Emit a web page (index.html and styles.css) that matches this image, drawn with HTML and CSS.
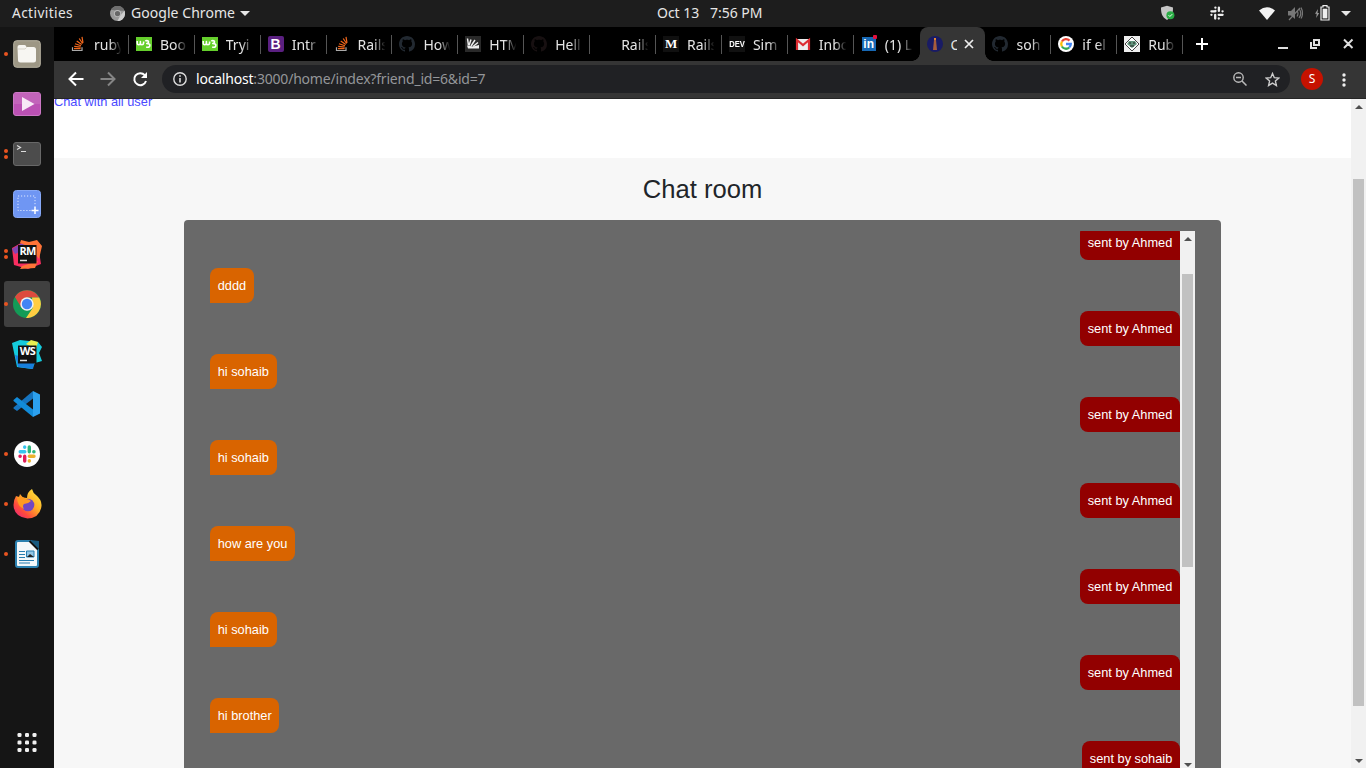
FILE: index.html
```html
<!DOCTYPE html>
<html lang="en">
<head>
<meta charset="utf-8">
<title>Chat room</title>
<link rel="stylesheet" href="styles.css">
</head>
<body>
<svg class="defs" width="0" height="0">
  <symbol id="so" viewBox="0 0 16 16"><path d="M2.500 11.200v3.300h9.500v-3.300" fill="none" stroke="#aaa" stroke-width="1.200"/><path d="M4 12.600h6.600M4.200 10.300l6.500.8M5 7.800l6 2M6.700 4.900l5 3.600M9.200 2.500l3.400 5M12 .8l1 6" stroke="#f4681c" stroke-width="1.200"/></symbol>
  <symbol id="w3" viewBox="0 0 16 16"><path fill="#65cf2c" d="M0 1h16v14H0z"/><path d="M1.200 5v2.200q0 1.600 1.500 1.600T4.400 7.200V5.500v1.700q0 1.600 1.500 1.600t1.700-1.600V5.500M9.300 5.200q1.500-1.300 3 0 .8 1.600-1.500 2.300 3.600 0 3 2.400-.9 2.200-3.600 1" fill="none" stroke="#fff" stroke-width="1.600" stroke-linejoin="round"/></symbol>
  <symbol id="gh" viewBox="0 0 16 16"><path fill="currentColor" d="M8 0C3.580 0 0 3.580 0 8c0 3.540 2.290 6.530 5.470 7.590.4.070.55-.17.55-.38 0-.19-.010-.82-.010-1.490-2.010.37-2.530-.49-2.690-.94-.09-.23-.48-.94-.82-1.130-.28-.15-.68-.52-.010-.53.63-.010 1.080.58 1.230.82.72 1.210 1.870.87 2.330.66.070-.52.28-.87.510-1.070-1.780-.2-3.640-.89-3.640-3.950 0-.87.310-1.590.82-2.150-.08-.2-.36-1.020.08-2.120 0 0 .67-.21 2.200.82.640-.18 1.320-.27 2-.27s1.360.09 2 .27c1.530-1.040 2.200-.82 2.200-.82.440 1.100.16 1.920.08 2.120.510.56.82 1.270.82 2.150 0 3.070-1.870 3.750-3.650 3.950.29.25.540.73.540 1.480 0 1.070-.010 1.930-.010 2.200 0 .21.15.46.55.38A8 8 0 0 0 16 8c0-4.420-3.580-8-8-8z"/></symbol>
  <symbol id="rm" viewBox="0 0 30 30"><path fill="#f82e60" d="M0 9l9-5 17 2 3 19-13 5-14-4z"/><path fill="#8345b4" d="M0 10l10-6 7 5L3 15z"/><path fill="#ff7438" d="M9 1l8 2 8-2 5 6-3 13-9-12-10-4zM10 27l16-5-3 7-15 1z"/><path fill="#111" d="M6 6h18.500v18.500H6z"/><path d="M8 21.500h7" stroke="#ddd" stroke-width="1.500"/></symbol>
</svg>
<div class="screen">
  <header class="topbar">
    <span class="activities">Activities</span>
    <svg class="app-ico" width="15" height="15" viewBox="0 0 16 16"><circle cx="8" cy="8" r="8" fill="#999"/><path d="M1 4a8 8 0 0 1 14.500 1H8z" fill="#6f6f6f"/><path d="M15.500 5A8 8 0 0 1 8 16l3-6z" fill="#ccc"/><circle cx="8" cy="8" r="3.800" fill="#bbb"/><circle cx="8" cy="8" r="2.800" fill="#666"/></svg>
    <span class="app-name">Google Chrome</span>
    <i class="caret"></i>
    <span class="clock">Oct 13&nbsp;&nbsp; 7:56 PM</span>
    <div class="tray">
      <svg width="15" height="16" viewBox="0 0 15 16"><path d="M1 2.500L7 .7l6 1.800c0 6-1 9.500-6 12.500C2 12 1 8.500 1 2.500z" fill="#c6c6c6"/><circle cx="10.400" cy="10.200" r="4" fill="#2aad45"/><path d="M8.600 10.200l1.300 1.300 2.300-2.300" fill="none" stroke="#fff"/></svg>
      <svg class="t-slack" width="14" height="14" viewBox="0 0 14 14"><path d="M5.400 4.900V4.800M5.400 1.600v.1M8.900 1.600v3.300M1.400 5.300h4M12.500 5.300h.1M1.400 8.800h.1M8.700 8.800h3.900M5.200 8.900v3.600M8.800 12.500v.1" stroke="#eee" stroke-width="2.300" stroke-linecap="round"/></svg>
      <svg class="t-wifi" width="16" height="13" viewBox="0 0 16 13"><path d="M0 3.500Q8-2.800 16 3.500L8 13z" fill="#f2f2f2"/></svg>
      <svg class="t-vol" width="15" height="15" viewBox="0 0 15 15"><path d="M0 5h3l4-4v12L3 9.500H0z" fill="#777"/><path d="M9 4.500q2 3 0 6M11 2.500q3.500 5 0 9.500M13 1.500q3 6 0 11M1 14L12 2" fill="none" stroke="#777" stroke-width="1.200"/></svg>
      <svg class="t-bat" width="15" height="16" viewBox="0 0 15 16"><path d="M3 4L0 8.700h1.700L1.200 13l3-5H2.500z" fill="#999"/><path d="M8 .6h4V2h2v13H6V2h2z" fill="none" stroke="#eee" stroke-width="1.200"/><path d="M7.600 3.700h4.800v9.700H7.600z" fill="#eee"/></svg>
      <i class="caret"></i>
    </div>
  </header>
  <div class="desktop">
    <nav class="dock">
      <div class="app one"><svg width="28" height="28" viewBox="0 0 28 28"><rect x=".7" y=".7" width="26.600" height="26.600" rx="3" fill="#9d9785" stroke="#b8b3a2"/><path d="M4.500 7q0-2 2-2h5q1.500 0 2 2h7q2.500 0 2.500 2.500V20q0 2.500-2.500 2.500h-13Q5 22.500 5 20z" fill="#f7f6f2"/><path d="M5 9h7l1.500-1.500" fill="none" stroke="#d7d4c9"/></svg></div>
      <div class="app"><svg width="28" height="24" viewBox="0 0 28 24"><rect x=".5" y=".5" width="27" height="23" rx="2.500" fill="#bb51b4" stroke="#cb77c4"/><path d="M1 12h26V3q0-2-2-2H3Q1 1 1 3z" fill="#c264ba"/><path d="M9 5l12.500 7L9 19z" fill="#f7e9f6"/></svg></div>
      <div class="app two"><svg width="28" height="24" viewBox="0 0 28 24"><rect x=".5" y=".5" width="27" height="23" rx="2.500" fill="#4c4c4c" stroke="#686868"/><path d="M4 3.500l3.500 2L4 7.500M8 9.500h5" fill="none" stroke="#ddd" stroke-width="1.200"/></svg></div>
      <div class="app"><svg width="28" height="28" viewBox="0 0 28 28"><rect x=".5" y=".5" width="27" height="27" rx="3" fill="#6f96f3" stroke="#87a9f7"/><rect x="5" y="6" width="17" height="14.500" fill="none" stroke="#dce6ff" stroke-dasharray="1.200 1.800"/><path d="M22 17v7M18.500 20.500h7" stroke="#fff" stroke-width="1.500"/></svg></div>
      <div class="app two"><div class="jb"><svg width="30" height="30"><use href="#rm"/></svg><b>RM</b></div></div>
      <div class="app one current"><svg width="28" height="28" viewBox="0 0 28 28"><circle cx="14" cy="14" r="14" fill="#139b57"/><path d="M1.900 7A14 14 0 0 1 26.200 7.500H14L8 17z" fill="#dd4b3e"/><path d="M26.200 7.500A14 14 0 0 1 13 28l7-10.500-1-10z" fill="#ffcd42"/><circle cx="14" cy="14" r="6.700" fill="#f1f1f1"/><circle cx="14" cy="14" r="5.200" fill="#4285f4"/></svg></div>
      <div class="app"><div class="jb"><svg width="30" height="30" viewBox="0 0 30 30"><path fill="#15cbdc" d="M0 4l8-3 18 2 4 5-3 6 3 8-7 2-3 6-15-2z"/><path fill="#e8ee50" d="M14 5l5-4 7 2-2 7z"/><path fill="#187fdc" d="M3 16l3 12 15 2 2-9z"/><path fill="#111" d="M6 6.500h18.500v18H6z"/><path d="M8 21.500h7" stroke="#ddd" stroke-width="1.500"/></svg><b>WS</b></div></div>
      <div class="app"><svg width="28" height="28" viewBox="0 0 28 28"><path d="M20 1l7 3.500v19L20 27z" fill="#2ca0ee"/><path d="M20 1v7.500L4 21l-3.500-2.500v-1z" fill="#1674bf"/><path d="M.5 10L4 7l16 12.500V27L.5 11z" fill="#128bd9"/></svg></div>
      <div class="app one"><svg width="26" height="26" viewBox="0 0 26 26"><circle cx="13" cy="13" r="13" fill="#fff"/><g fill="none" stroke-width="3.400" stroke-linecap="round"><path d="M6.200 10.700h4.600M10.700 6v.2" stroke="#36c5f0"/><path d="M15.300 6v4.700M19.800 10.700h.2" stroke="#2eb67d"/><path d="M15.300 15.300h4.700M15.300 19.800v.2" stroke="#ecb22e"/><path d="M10.700 15.300V20M6.200 15.300H6" stroke="#e01e5a"/></g></svg></div>
      <div class="app one"><svg width="29" height="30" viewBox="0 0 29 30"><defs><linearGradient id="ff" x1="1" y1="0" x2=".1" y2="1"><stop offset="0" stop-color="#fff044"/><stop offset=".45" stop-color="#ffad26"/><stop offset=".75" stop-color="#ff4a3c"/><stop offset="1" stop-color="#e72281"/></linearGradient></defs><path d="M3 7l3 1 1-3 3 3.500 4 .5q0-6 5-9 1 4 4 6 6 5 5.500 11Q27 29 14.500 29.500 1 28 .5 16 .5 11 3 7z" fill="url(#ff)"/><circle cx="15" cy="16" r="6.300" fill="#7147c3"/><path d="M4 8q6-1 9 2 3 0 5 2-3 3-7 3-2 2 0 5-7-3-7-12z" fill="#ff9a22"/></svg></div>
      <div class="app one"><svg width="24" height="28" viewBox="0 0 24 28"><path d="M3 1h13l7 8v16q0 2-2 2H3q-2 0-2-2V3q0-2 2-2z" fill="#f4f8fa" stroke="#2c81b0" stroke-width="2"/><path d="M15 0l9 9V1z" fill="#185a80"/><path d="M14.500 1L23 9.500" stroke="#111" stroke-width="2"/><path d="M4 11.500h6M4 14.500h6M4 17.500h6M4 20.500h15M4 23h11" stroke="#277db0" stroke-width="1.200"/><path d="M11.500 11h7.500v6h-7.500z" fill="#92c6e6" stroke="#277db0"/><path d="M12 17l3-3 4 3z" fill="#222"/></svg></div>
      <div class="grid"><svg width="20" height="20" viewBox="0 0 20 20" fill="#f0f0f0"><g id="gr"><rect x=".5" y="1" width="4" height="4" rx="1.300"/><rect x="8" y="1" width="4" height="4" rx="1.300"/><rect x="15.500" y="1" width="4" height="4" rx="1.300"/></g><use href="#gr" y="7.500"/><use href="#gr" y="15"/></svg></div>
    </nav>
    <main class="browser">
      <div class="tabs">
        <div class="tab"><svg><use href="#so"/></svg><span>ruby</span></div>
        <div class="tab"><svg><use href="#w3"/></svg><span>Boo</span></div>
        <div class="tab"><svg><use href="#w3"/></svg><span>Tryi</span></div>
        <div class="tab"><i class="fav boot">B</i><span>Intr</span></div>
        <div class="tab"><svg><use href="#so"/></svg><span>Rails</span></div>
        <div class="tab"><svg class="gh"><use href="#gh"/></svg><span>How</span></div>
        <div class="tab"><svg viewBox="0 0 16 16"><path fill="#292929" d="M0 0h16v16H0z"/><path d="M2.500 2.500l1 7M4 9.500l2-6M6 10l4-6M8 10.500l5-4" fill="none" stroke="#eee" stroke-width="1.500"/><path d="M2 9.500l6 1 6-1.500v3.500H3z" fill="#eee"/></svg><span>HTM</span></div>
        <div class="tab"><svg class="gh dim"><use href="#gh"/></svg><span>Hell</span></div>
        <div class="tab"><svg></svg><span>Rails</span></div>
        <div class="tab"><i class="fav med">M</i><span>Rails</span></div>
        <div class="tab"><i class="fav dev">DEV</i><span>Sim</span></div>
        <div class="tab"><svg viewBox="0 0 16 16"><path fill="#eee" d="M1 3h14v11H1z"/><path d="M2 14V4l6 5 6-5v10" fill="none" stroke="#dd2c32" stroke-width="2.200"/></svg><span>Inbo</span></div>
        <div class="tab last"><i class="fav in">in</i><span>(1) L</span></div>
        <div class="tab active"><svg viewBox="0 0 16 16"><circle cx="8" cy="8" r="8" fill="#191b65"/><path d="M7 4h2l1 10H6z" fill="#a65c3c"/><path d="M7 2h2v2H7z" fill="#e88a2e"/></svg><span>C</span><svg class="close" viewBox="0 0 10 10"><path d="M1 1l8 8M9 1L1 9" stroke="#eee" stroke-width="1.700"/></svg></div>
        <div class="tab"><svg class="gh"><use href="#gh"/></svg><span>soh</span></div>
        <div class="tab"><svg viewBox="0 0 16 16"><circle cx="8" cy="8" r="8" fill="#fff"/><g fill="none" stroke-width="2.300"><path d="M3.900 5.500A4.800 4.800 0 0 1 11.500 4.600" stroke="#ea4335"/><path d="M3.900 10.500a5 5 0 0 1 0-5" stroke="#fbbc05"/><path d="M3.900 10.500a4.800 4.800 0 0 0 7.300 1" stroke="#34a853"/><path d="M8 8h4.800q0 2-1.600 3.500" stroke="#4285f4"/></g></svg><span>if el</span></div>
        <div class="tab"><svg viewBox="0 0 16 16"><path fill="#eee" d="M0 0h16v16H0z"/><path d="M8 1l7 7-7 7-7-7z" fill="#fff" stroke="#444"/><path d="M5 5h6l2 3-5 4-5-4z" fill="#62947c"/><path d="M5 7h2M9 7h2M6 10h4" stroke="#222"/></svg><span>Rub</span></div>
        <svg class="plus" viewBox="0 0 12 12"><path d="M6 0v12M0 6h12" stroke="#fff" stroke-width="2"/></svg>
        <svg class="wins" width="76" height="12" viewBox="0 0 76 12" fill="none" stroke="#ddd" stroke-width="2"><path d="M0 10h10M36 2h5v5h-5zM33 4v6h6M66 1.500l8.500 8.500M74.500 1.500L66 10"/></svg>
      </div>
      <div class="toolbar">
        <svg class="nav" viewBox="0 0 16 16"><path d="M15.500 8H2.500M8 1.500L1.500 8 8 14.500" fill="none" stroke="#fff" stroke-width="2"/></svg>
        <svg class="nav" viewBox="0 0 16 16"><path d="M.5 8h13M8 1.500L14.500 8 8 14.500" fill="none" stroke="#858585" stroke-width="2"/></svg>
        <svg class="nav" viewBox="0 0 16 16"><path d="M12.800 4.200A6 6 0 1 0 14 10" fill="none" stroke="#fff" stroke-width="2"/><path d="M15 1v6H9z" fill="#fff"/></svg>
        <div class="omni">
          <svg width="14" height="14" viewBox="0 0 14 14"><circle cx="7" cy="7" r="6.200" fill="none" stroke="#ddd" stroke-width="1.400"/><path d="M7 6v4.500M7 3.300v1.500" stroke="#ddd" stroke-width="1.600"/></svg>
          <span class="url"><b>localhost</b>:3000/home/index?friend_id=6&amp;id=7</span>
          <svg class="mag" width="14" height="14" viewBox="0 0 14 14"><circle cx="5.500" cy="5.500" r="4.700" fill="none" stroke="#bbb" stroke-width="1.400"/><path d="M9 9l4.500 4.500M3 5.500h5" stroke="#bbb" stroke-width="1.500"/></svg>
          <svg width="15" height="15" viewBox="0 0 15 15"><path d="M7.500 1.500l1.800 4.200 4.500.4-3.400 3 1 4.400-3.900-2.400-3.900 2.400 1-4.400-3.400-3 4.500-.4z" fill="none" stroke="#ccc" stroke-width="1.400"/></svg>
        </div>
        <div class="avatar">S</div>
        <svg class="kebab" width="4" height="14" viewBox="0 0 4 14" fill="#eee"><circle cx="2" cy="2" r="1.700"/><circle cx="2" cy="7" r="1.700"/><circle cx="2" cy="12" r="1.700"/></svg>
      </div>
      <div class="view">
        <div class="page">
          <div class="head"><a class="all">Chat with all user</a></div>
          <h1>Chat room</h1>
          <div class="room">
            <div class="messages">
              <p class="sent">sent by Ahmed</p>
              <p class="got">dddd</p>
              <p class="sent">sent by Ahmed</p>
              <p class="got">hi sohaib</p>
              <p class="sent">sent by Ahmed</p>
              <p class="got">hi sohaib</p>
              <p class="sent">sent by Ahmed</p>
              <p class="got">how are you</p>
              <p class="sent">sent by Ahmed</p>
              <p class="got">hi sohaib</p>
              <p class="sent">sent by Ahmed</p>
              <p class="got">hi brother</p>
              <p class="sent">sent by sohaib</p>
            </div>
            <div class="bar inner"><i class="up"></i><i class="thumb"></i><i class="down"></i></div>
          </div>
        </div>
        <div class="bar outer"><i class="up"></i><i class="thumb"></i><i class="down"></i></div>
      </div>
    </main>
  </div>
</div>
</body>
</html>
```
FILE: styles.css
```css
* { box-sizing: border-box; }
body { margin: 0; background: #151515; font-family: "Noto Sans", sans-serif; }
svg { display: block; flex: none; }
.defs { position: absolute; }
.screen { width: 1366px; height: 768px; overflow: hidden; display: flex; flex-direction: column; }

.topbar { height: 27px; flex: none; display: flex; align-items: center; background: #1d1d1d; color: #e6e6e6; font-size: 14px; line-height: 18px; padding-left: 12px; white-space: nowrap; }
.topbar > span { margin-top: -1px; }
.activities { width: 98px; letter-spacing: .4px; }
.activities { font-size: 13.700px; }
.app-name { width: 105px; margin-left: 6px; letter-spacing: .05px; }
.caret { width: 0; border: 5px solid transparent; border-top-color: #e6e6e6; border-bottom: 0; margin-left: 4px; }
.clock { margin-left: 407px; width: 107px; letter-spacing: -.03px; }
.tray { display: flex; align-items: center; margin-left: 396px; margin-top: -1px; }
.t-slack { margin-left: 35px; }
.t-wifi { margin-left: 35px; }
.t-vol { margin-left: 13px; }
.t-bat { margin-left: 12px; }
.tray .caret { margin-left: 11px; }

.desktop { flex: 1; display: flex; min-height: 0; }
.dock { width: 54px; flex: none; background: #151515; display: flex; flex-direction: column; align-items: center; padding-top: 4px; }
.app { position: relative; width: 46px; height: 46px; margin-bottom: 4px; border-radius: 3px; display: flex; flex: none; align-items: center; justify-content: center; }
.current { background: #404040; }
.one::before, .two::before { content: ""; position: absolute; left: 0; top: 21px; width: 4px; height: 4px; border-radius: 50%; background: #e95420; }
.two::before { top: 18px; box-shadow: 0 6px #e95420; }
.jb { position: relative; }
.jb b { position: absolute; left: 6px; top: 6px; width: 19px; text-align: center; font: bold 11px/12px "Open Sans", sans-serif; color: #fff; letter-spacing: -.7px; }
.grid { margin-top: auto; padding-bottom: 16px; }

.browser { flex: 1; min-width: 0; display: flex; flex-direction: column; }
.tabs { height: 34px; flex: none; background: #000; display: flex; align-items: center; padding-left: 9px; }
.tab { position: relative; width: 65.900px; height: 34px; flex: none; display: flex; align-items: center; padding-left: 7px; color: #e4e4e4; font-size: 14px; }
.tab::after { content: ""; position: absolute; right: 0; top: 8px; width: 1px; height: 19px; background: #555; }
.tab svg, .fav { width: 16px; height: 16px; flex: none; }
.tab span { width: 28px; margin-left: 8px; overflow: hidden; white-space: nowrap; -webkit-mask-image: linear-gradient(90deg, #000 55%, transparent 98%); mask-image: linear-gradient(90deg, #000 55%, transparent 98%); }
.tab.active::after, .tab.last::after { display: none; }
.active { background: #353535; border-radius: 8px 8px 0 0; }
.active::before { content: ""; position: absolute; left: -8px; right: -8px; bottom: 0; height: 8px; background: radial-gradient(circle at 0 0, transparent 7.500px, #353535 8px) left / 8px 8px no-repeat, radial-gradient(circle at 100% 0, transparent 7.500px, #353535 8px) right / 8px 8px no-repeat; }
.tab.active span { width: 6px; -webkit-mask-image: none; mask-image: none; }
.tab .close { width: 10px; height: 10px; margin-left: 7px; }
.tab .gh { color: #222931; }
.tab .dim { color: #171011; }
.fav { font: bold 12px/16px "Liberation Sans", sans-serif; color: #fff; text-align: center; }
.boot { background: #5b2081; border-radius: 2px; font-size: 14px; }
.med { font: bold 13px/16px "Liberation Serif", serif; background: #101010; }
.dev { background: #111; font-size: 9.500px; letter-spacing: 0; transform: scaleX(.8); width: 20px; margin: 0 -2px; }
.in { position: relative; background: #1768b4; width: 14px; height: 14px; margin: 1px; line-height: 14px; }
.in::after { content: ""; position: absolute; right: -1px; top: -2px; width: 4px; height: 4px; border-radius: 1px; background: #e2103c; }
.plus { width: 12px; height: 12px; margin-left: 13px; }
.wins { margin-left: 70px; }

.toolbar { height: 38px; flex: none; background: #353535; border-bottom: 1px solid #262626; display: flex; align-items: center; padding-left: 14px; }
.nav { width: 16px; height: 16px; margin-right: 16px; margin-top: -1px; }
.omni { width: 1128px; height: 28px; border-radius: 14px; background: #202124; display: flex; align-items: center; padding: 0 10px 0 11px; margin-left: -2px; margin-top: -1px; }
.url { flex: 1; margin-left: 9px; font-size: 14px; line-height: 18px; color: #949699; letter-spacing: -.2px; }
.url b { font-weight: 400; color: #fff; }
.mag { margin-right: 18px; }
.avatar { width: 22px; height: 22px; margin-left: 11px; margin-top: -1px; border-radius: 50%; background: #c61200; color: #fff; font-size: 12px; line-height: 22px; text-align: center; }
.kebab { margin-left: 19px; }

.view { flex: 1; min-height: 0; display: flex; background: #f7f7f7; font-family: "Liberation Sans", Arial, sans-serif; font-size: 12.800px; }
.page { flex: 1; overflow: hidden; display: flex; flex-direction: column; align-items: center; }
.head { width: 100%; height: 59px; flex: none; background: #fff; overflow: hidden; }
.all { display: block; margin-top: -5px; line-height: 16px; color: #4a4aff; }
h1 { margin: 15px 0; flex: none; font-size: 25.600px; line-height: 32px; font-weight: 400; color: #212529; }
.room { width: 1037px; flex: 1; min-height: 0; background: #696969; border-radius: 4px 4px 0 0; padding: 11px 26px 0; display: flex; }
.messages { flex: 1; overflow: hidden; display: flex; flex-direction: column; align-items: flex-start; }
.messages p { flex: none; height: 35px; line-height: 35px; padding: 0 7.700px; margin: 0 0 8px; color: #fff; }
.messages p:first-child { margin-top: -6px; }
.messages .sent { align-self: flex-end; background: #920000; border-radius: 8px 8px 0 8px; }
.messages .got { background: #d96400; border-radius: 8px 8px 8px 0; }
.bar { width: 15px; flex: none; background: #f1f1f1; display: flex; flex-direction: column; align-items: center; }
.up, .down { width: 0; border: 4px solid transparent; }
.up { border-top: 0; border-bottom-color: #505050; }
.down { border-bottom: 0; border-top-color: #505050; margin-top: auto; }
.thumb { width: 11px; background: #c1c1c1; }
.inner .up { margin-top: 6px; }
.inner .thumb { height: 293px; margin-top: 33px; }
.inner .down { margin-bottom: 1px; }
.outer .up { margin-top: 6px; }
.outer .thumb { height: 527px; margin-top: 70px; }
.outer .down { margin-bottom: 5px; }
```
